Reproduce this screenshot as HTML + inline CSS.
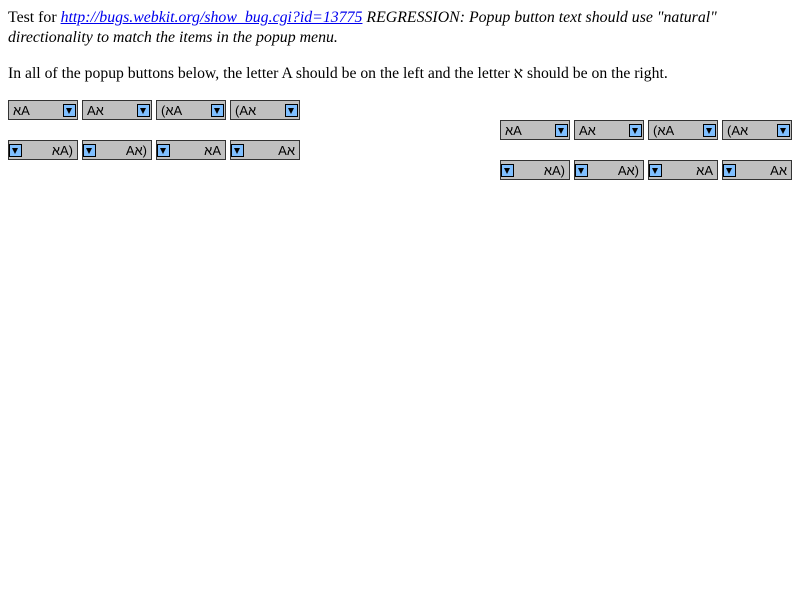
<!DOCTYPE html>
<html><head><meta charset="utf-8"><style>
body{margin:0;background:#fff;font-family:"Liberation Serif",serif;font-size:15.85px;}
p{margin:0;position:absolute;left:8px;line-height:20px;white-space:nowrap}
.b{position:absolute;width:68px;height:18px;border:1px solid #333;background:#c0c0c0;font-family:"Liberation Sans","DejaVu Sans",sans-serif;font-size:13px;line-height:19px;}
.t{position:absolute;top:0;direction:ltr;unicode-bidi:bidi-override;white-space:pre}
.a{position:absolute;top:3px;width:13px;height:13px;border:1px solid #000;background:#7fbfff;box-sizing:border-box}
.a:after{content:"";position:absolute;left:2px;top:3px;border-left:3.5px solid transparent;border-right:3.5px solid transparent;border-top:6px solid #000}
.l .t{left:4px}.l .a{right:1px}
.r .t{right:4px}.r .a{left:0px}
</style></head><body>
<p style="top:8px">Test for <i><a href="#" style="color:#00e">http://bugs.webkit.org/show_bug.cgi?id=13775</a> REGRESSION: Popup button text should use "natural"<br>directionality to match the items in the popup menu.</i></p>
<p style="top:64px;font-size:15.7px">In all of the popup buttons below, the letter A should be on the left and the letter א should be on the right.</p>

<div class="b l" style="left:8px;top:100px"><span class="t">אA</span><span class="a"></span></div>
<div class="b l" style="left:82px;top:100px"><span class="t">Aא</span><span class="a"></span></div>
<div class="b l" style="left:156px;top:100px"><span class="t">(אA</span><span class="a"></span></div>
<div class="b l" style="left:230px;top:100px"><span class="t">(Aא</span><span class="a"></span></div>

<div class="b r" style="left:8px;top:140px"><span class="t">אA)</span><span class="a"></span></div>
<div class="b r" style="left:82px;top:140px"><span class="t">Aא)</span><span class="a"></span></div>
<div class="b r" style="left:156px;top:140px"><span class="t">אA</span><span class="a"></span></div>
<div class="b r" style="left:230px;top:140px"><span class="t">Aא</span><span class="a"></span></div>

<div class="b l" style="left:500px;top:120px"><span class="t">אA</span><span class="a"></span></div>
<div class="b l" style="left:574px;top:120px"><span class="t">Aא</span><span class="a"></span></div>
<div class="b l" style="left:648px;top:120px"><span class="t">(אA</span><span class="a"></span></div>
<div class="b l" style="left:722px;top:120px"><span class="t">(Aא</span><span class="a"></span></div>

<div class="b r" style="left:500px;top:160px"><span class="t">אA)</span><span class="a"></span></div>
<div class="b r" style="left:574px;top:160px"><span class="t">Aא)</span><span class="a"></span></div>
<div class="b r" style="left:648px;top:160px"><span class="t">אA</span><span class="a"></span></div>
<div class="b r" style="left:722px;top:160px"><span class="t">Aא</span><span class="a"></span></div>
</body></html>
